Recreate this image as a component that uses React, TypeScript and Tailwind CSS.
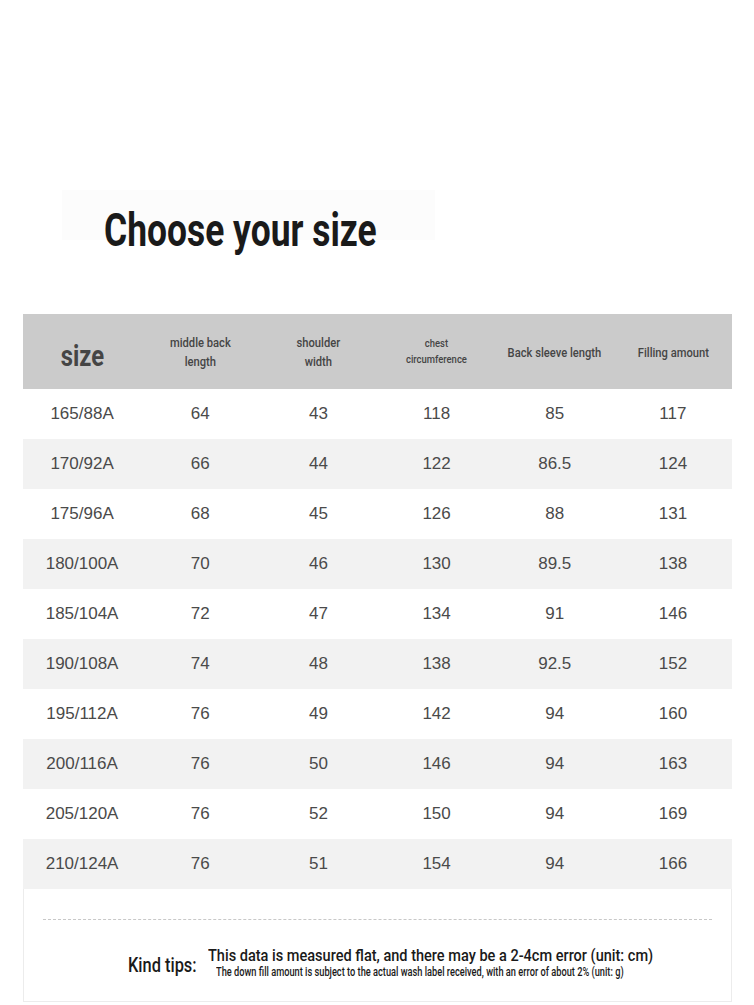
import React from 'react';

const cond = "font-['Roboto',sans-serif] whitespace-nowrap inline-block";

const headers = [
  { t: 'middle back\nlength', c: 'text-[13px] leading-[19px]' },
  { t: 'shoulder\nwidth', c: 'text-[13px] leading-[19px]' },
  { t: 'chest\ncircumference', c: 'text-[11px] leading-[16px]' },
  { t: 'Back sleeve length', c: 'text-[13px] leading-[19px]' },
  { t: 'Filling amount', c: 'text-[13px] leading-[19px]' },
];

const rows = [
  ['165/88A', '64', '43', '118', '85', '117'],
  ['170/92A', '66', '44', '122', '86.5', '124'],
  ['175/96A', '68', '45', '126', '88', '131'],
  ['180/100A', '70', '46', '130', '89.5', '138'],
  ['185/104A', '72', '47', '134', '91', '146'],
  ['190/108A', '74', '48', '138', '92.5', '152'],
  ['195/112A', '76', '49', '142', '94', '160'],
  ['200/116A', '76', '50', '146', '94', '163'],
  ['205/120A', '76', '52', '150', '94', '169'],
  ['210/124A', '76', '51', '154', '94', '166'],
];

export default function App() {
  return (
    <div className="w-[754px] h-[1005px] bg-white overflow-hidden">
      {/* Title */}
      <div className="h-[314px] pt-[190px] pl-[62px]">
        <div className="w-[373px] h-[50px] bg-[#fcfcfc] flex items-center">
          <h1 className={`${cond} ml-[42px] mt-[29px] text-[46px] leading-none font-bold text-[#1a1a1a] origin-left scale-x-[0.77]`}>
            Choose your size
          </h1>
        </div>
      </div>

      {/* Table */}
      <div className="mx-[23px] w-[709px]">
        <div className="grid grid-cols-6 h-[75px] bg-[#cbcbcb] items-center text-[#454545]">
          <div className="flex justify-center pt-[8px]">
            <span className={`${cond} text-[29px] leading-[34px] font-bold scale-x-[0.82]`}>size</span>
          </div>
          {headers.map((h, i) => (
            <div key={i} className="flex justify-center pt-[1px]">
              <span className={`${cond} font-medium whitespace-pre text-center scale-x-[0.86] ${h.c}`}>{h.t}</span>
            </div>
          ))}
        </div>
        {rows.map((r, i) => (
          <div
            key={i}
            className={`grid grid-cols-6 h-[50px] items-center ${i % 2 === 1 ? 'bg-[#f2f2f2]' : 'bg-white'}`}
          >
            {r.map((c, j) => (
              <div key={j} className="text-center font-['Liberation_Sans',Arial,sans-serif] text-[17px] text-[#4a4a4a]">
                {c}
              </div>
            ))}
          </div>
        ))}

        {/* Tips */}
        <div className="h-[113px] border-x border-b border-[#ececec] pt-[30px] px-[19px]">
          <div className="border-t border-dashed border-[#c8c8c8]" />
          <div className="flex items-center mt-[26px] pl-[85px]">
            <div className="w-[80px] shrink-0 flex mt-[4px]">
              <span className={`${cond} text-[20px] leading-[24px] font-medium text-[#1a1a1a] origin-left scale-x-[0.82]`}>Kind tips:</span>
            </div>
            <div className="flex flex-col">
              <div className="flex">
                <span className={`${cond} text-[17px] leading-[19px] font-medium text-[#1a1a1a] origin-left scale-x-[0.855]`}>
                  This data is measured flat, and there may be a 2-4cm error (unit: cm)
                </span>
              </div>
              <div className="flex pl-[8px]">
                <span className={`${cond} text-[12px] leading-[15px] font-medium text-[#1a1a1a] origin-left scale-x-[0.77]`}>
                  The down fill amount is subject to the actual wash label received, with an error of about 2% (unit: g)
                </span>
              </div>
            </div>
          </div>
        </div>
      </div>
    </div>
  );
}
